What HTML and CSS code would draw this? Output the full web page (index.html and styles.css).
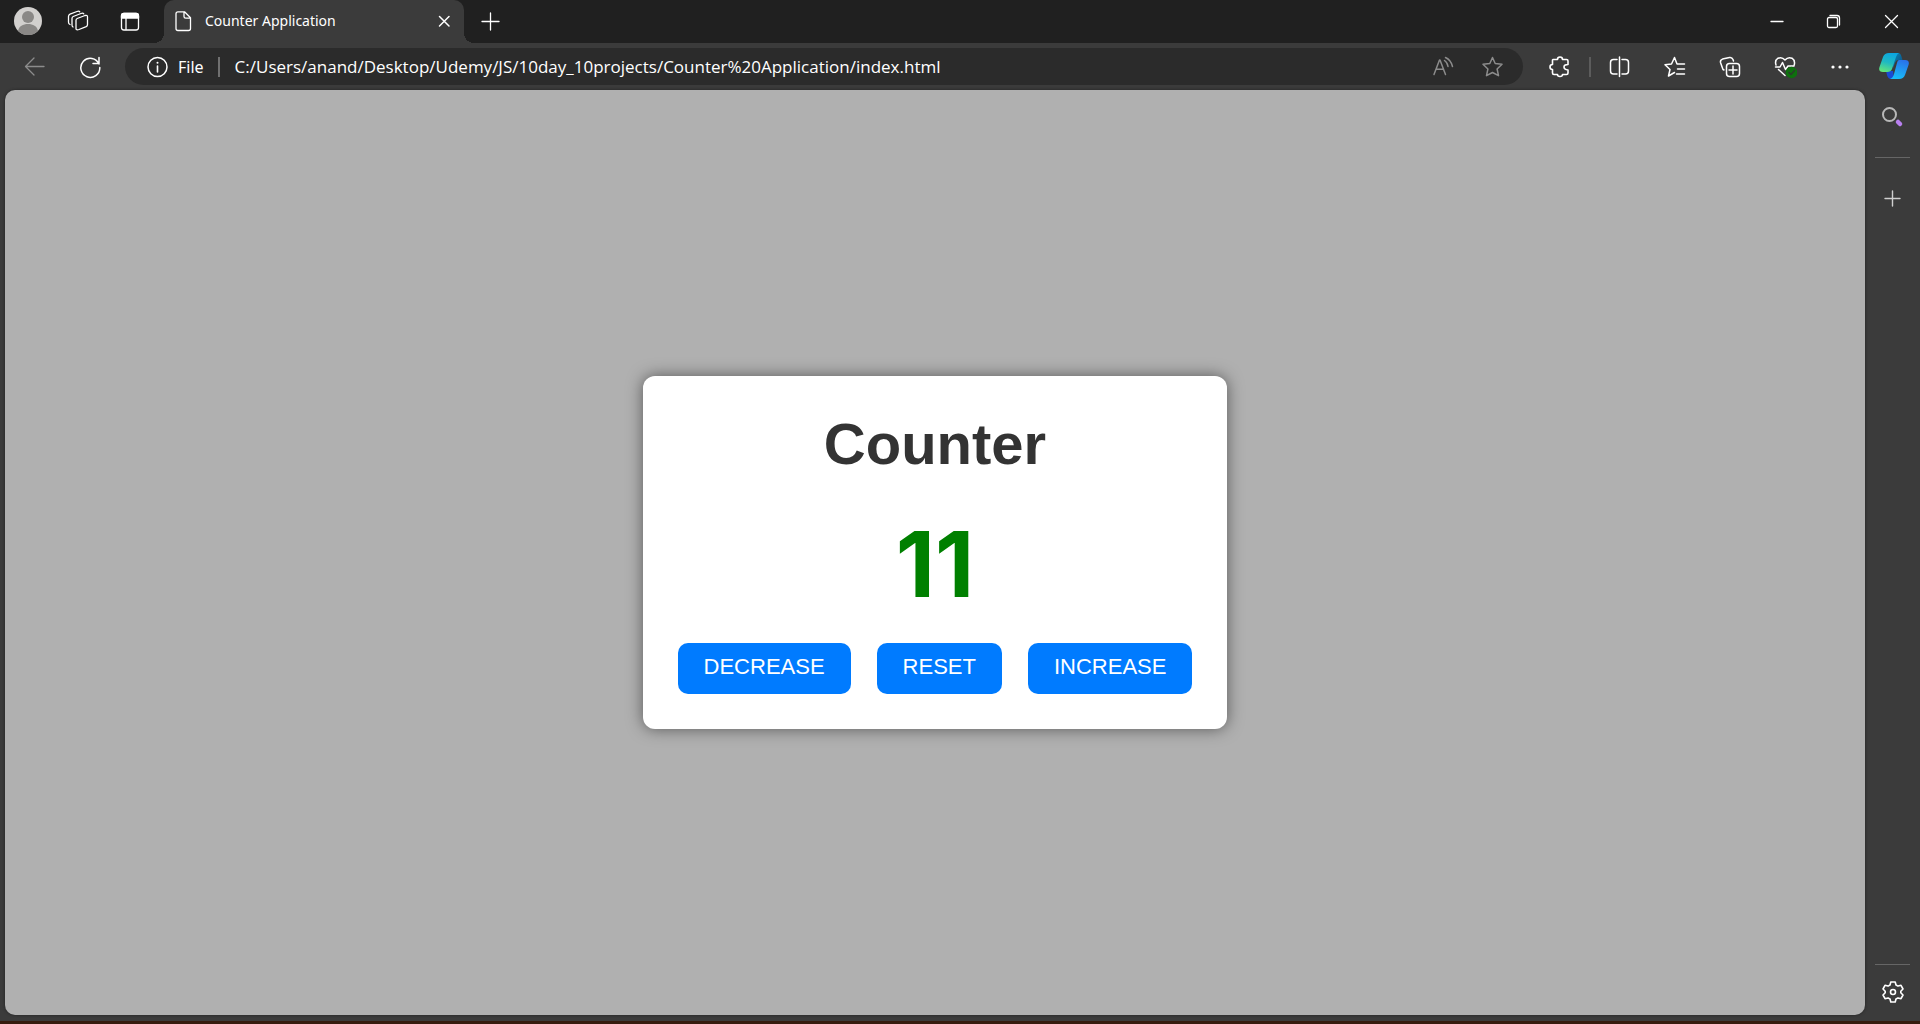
FILE: index.html
```html
<!DOCTYPE html>
<html lang="en">
<head>
<meta charset="utf-8">
<title>Counter Application</title>
<link rel="stylesheet" href="styles.css">
</head>
<body>
<header class="titlebar">
  <button class="chrome-btn" aria-label="Profile">
    <svg class="avatar" viewBox="0 0 28 28"><circle cx="14" cy="14" r="14" fill="#d2d0ce"/><circle cx="14" cy="10" r="6" fill="#8a8886"/><path d="M4 24c1-5 5-7 10-7s9 2 10 7a14 14 0 0 1-20 0z" fill="#8a8886"/></svg>
  </button>
  <button class="chrome-btn" aria-label="Workspaces">
    <svg class="icon" viewBox="0 0 24 24"><path d="M9 11.200Q9 10 10.200 9.500L18 6.500Q20.500 5.800 20.500 8V15.500Q20.500 17 19.200 17.600L12 20.500Q9 21.500 9 19.500ZM6 18Q5 17.500 5 16V9.500Q5 8 6.200 7.500L14 4.500Q16 3.800 16.800 4.800M3 15.500Q1.500 15 1.500 13.300V7.500Q1.500 5.700 3 5.100L10 2.500Q12 1.800 12.800 2.800"/></svg>
  </button>
  <button class="chrome-btn" aria-label="Tab actions menu">
    <svg class="icon" viewBox="0 0 24 24"><rect x="3.500" y="4.500" width="17" height="16.500" rx="2.500"/><path d="M3.500 9V7Q3.500 4.500 6 4.500H18Q20.500 4.500 20.500 7V9Z" fill="#fff"/><path d="M8 8V20.500"/></svg>
  </button>
  <div class="tab">
    <svg class="icon" viewBox="0 0 24 24"><path d="M7 2.800H13.500L19.500 8.800V19.500Q19.500 21.500 17.500 21.500H7Q5 21.500 5 19.500V4.800Q5 2.800 7 2.800ZM13 3V7.500Q13 9.200 14.700 9.200H19"/></svg>
    <span class="tab-title">Counter Application</span>
    <button class="tab-close" aria-label="Close tab">
      <svg class="icon" viewBox="0 0 24 24"><path d="M7.500 7.500L17 17M17 7.500L7.500 17" stroke-width="1.500"/></svg>
    </button>
  </div>
  <button class="chrome-btn" aria-label="New tab">
    <svg class="icon" viewBox="0 0 24 24"><path d="M12.500 4V21M4 12.500H21"/></svg>
  </button>
  <div class="window-controls">
    <button class="window-btn" aria-label="Minimize"><svg class="icon" viewBox="0 0 24 24"><path d="M5 12.500H17"/></svg></button>
    <button class="window-btn" aria-label="Restore"><svg class="icon" viewBox="0 0 24 24"><rect x="4.500" y="8.500" width="10" height="10" rx="1.500"/><path d="M7 6.500H14Q16.500 6.500 16.500 9V16"/></svg></button>
    <button class="window-btn" aria-label="Close"><svg class="icon" viewBox="0 0 24 24"><path d="M5.500 6.500L17.500 18.500M17.500 6.500L5.500 18.500"/></svg></button>
  </div>
</header>

<nav class="toolbar">
  <button class="tool-btn dim" aria-label="Back"><svg class="icon" viewBox="0 0 24 24"><path d="M21 11.500H2.500M11 3L2.500 11.500L11 20" /></svg></button>
  <button class="tool-btn" aria-label="Refresh"><svg class="icon" viewBox="0 0 24 24"><path d="M21 9A9.500 9.500 0 1 0 21.800 12.500M21 2.500V8.500H15" stroke-width="1.500"/></svg></button>
  <div class="address">
    <svg class="icon" viewBox="0 0 24 24"><circle cx="12.500" cy="12" r="9.500" stroke-width="1.500"/><path d="M12.500 11V17" stroke-width="1.600"/><circle class="solid" cx="12.500" cy="7.800" r="1"/></svg>
    <label class="scheme" for="url">File</label>
    <input class="url" id="url" type="text" value="C:/Users/anand/Desktop/Udemy/JS/10day_10projects/Counter%20Application/index.html">
    <button class="address-btn dim" aria-label="Read aloud"><svg class="icon" viewBox="0 0 24 24"><path d="M4 19.500L9.500 5H10L15.500 19.500M6 14.300H13.600M14.500 5.500Q17.500 7.500 18 11.500M15.500 2.500Q21 5 22.500 11.500" stroke-width="1.500"/></svg></button>
    <button class="address-btn dim" aria-label="Add to favorites"><svg class="icon" viewBox="0 0 24 24"><path d="M12.500 2.500L15.200 8.500L22 9.300L17.100 14L18.500 20.700L12.500 17.500L6.500 20.700L7.900 14L3 9.300L9.800 8.500Z" stroke-width="1.500"/></svg></button>
  </div>
  <button class="tool-btn" aria-label="Extensions"><svg class="icon" viewBox="0 0 24 24"><path d="M6 4.500H10.500Q10.500 2 13 2T15.500 4.500H19.500Q21 4.500 21 6V9.500Q17 9.500 17 12T21 15V18Q21 19.500 19.500 19.500H15.500Q15.500 21.500 13 21.500T10.500 19.500H7Q5.500 19.500 5.500 18V14.500Q3 14.500 3 12T5.500 9.500V5Z" stroke-width="1.600"/></svg></button>
  <span class="divider"></span>
  <button class="tool-btn" aria-label="Split screen"><svg class="icon" viewBox="0 0 24 24"><path d="M9 19H5.500Q2.500 19 2.500 16V7.500Q2.500 4.500 5.500 4.500H9M14 4.500H17.500Q20.500 4.500 20.500 7.500V16Q20.500 19 17.500 19H14M11.500 2V21.500" stroke-width="1.500"/></svg></button>
  <button class="tool-btn" aria-label="Favorites"><svg class="icon" viewBox="0 0 24 24"><path d="M11.500 17.500L5.500 21L7 14.500L2 9.700L8.500 9L11.500 2.500L14 9H21.500M14.500 14H21.500M13.500 19H21.500" stroke-width="1.500"/></svg></button>
  <button class="tool-btn" aria-label="Collections"><svg class="icon" viewBox="0 0 24 24"><rect x="8.500" y="8.500" width="13" height="13" rx="3" stroke-width="1.500"/><path d="M15 11V19M11 15H19M6 15L5 14.500L2.500 7.500Q2 5 4.500 4.100L11.500 2.500Q14 2 15 4.500L15.500 6" stroke-width="1.500"/></svg></button>
  <button class="tool-btn" aria-label="Browser essentials"><svg class="icon" viewBox="0 0 24 24"><path d="M3 10Q1.500 5.500 5 3.200Q9 1.500 12 5Q15 1.500 19 3.200Q22.500 5.500 21.200 10M2.500 12H7L9.500 7.500L12.500 14.500L15 11H21M5.500 14.500L12 20.500" stroke-width="1.500"/><circle cx="18.500" cy="17.500" r="5.800" fill="#0e700e" stroke="none"/><path d="M16 17.500L18 19.500L21.500 15.500" stroke="#2b3b2b" stroke-width="1.400"/></svg></button>
  <button class="tool-btn" aria-label="Settings and more"><svg class="icon" viewBox="0 0 24 24"><g class="solid"><circle cx="5" cy="12" r="1.600"/><circle cx="12" cy="12" r="1.600"/><circle cx="19" cy="12" r="1.600"/></g></svg></button>
  <button class="copilot-btn" aria-label="Copilot">
    <svg class="copilot" viewBox="0 0 30 28">
      <defs>
        <linearGradient id="teal" x1="0.600" y1="0" x2="0.300" y2="1"><stop offset="0" stop-color="#0ba5e0"/><stop offset="0.500" stop-color="#1fb9c3"/><stop offset="1" stop-color="#63e57a"/></linearGradient>
        <linearGradient id="azure" x1="0.700" y1="0" x2="0.400" y2="1"><stop offset="0" stop-color="#2a71e8"/><stop offset="1" stop-color="#18bdf8"/></linearGradient>
        <linearGradient id="fold" x1="0" y1="0" x2="1" y2="1"><stop offset="0" stop-color="#0b86b5"/><stop offset="1" stop-color="#0a4a80"/></linearGradient>
      </defs>
      <path d="M14 0H19Q21.500 0 22.300 3L23.500 7H19Q17 7 16 10L14 15Z" fill="url(#fold)"/>
      <path d="M7 18H14L15 24Q14 26 12 26Q9 26 8 22Z" fill="#194bd4"/>
      <path d="M10 0H20Q18 1 17 4L13 16Q12 19 8 19H4Q-1 19 .5 14L4 4Q5.500 0 10 0Z" fill="url(#teal)"/>
      <path d="M20 7H26Q31 7 29.500 12L26 22Q24.500 26 20 26H11Q14 25 15 21L18 10Q18.500 7 20 7Z" fill="url(#azure)"/>
    </svg>
  </button>
</nav>

<div class="workspace">
  <main class="page">
    <section class="card">
      <h1 class="heading">Counter</h1>
      <output class="count">11</output>
      <div class="actions">
        <button class="action">DECREASE</button>
        <button class="action">RESET</button>
        <button class="action">INCREASE</button>
      </div>
    </section>
  </main>
  <aside class="sidebar">
    <button class="side-btn" aria-label="Search"><svg class="icon" viewBox="0 0 24 24"><path d="M17 17L19 19" stroke="#b980f0" stroke-width="4.500"/><circle cx="8.500" cy="9.500" r="6.500" stroke="#b8b8b8" stroke-width="2"/></svg></button>
    <hr class="rule">
    <button class="side-btn" aria-label="Customize"><svg class="icon" viewBox="0 0 24 24"><path d="M11.500 5V20M4 12.500H19" stroke="#d0d0d0" stroke-width="1.400"/></svg></button>
    <span class="spacer"></span>
    <hr class="rule">
    <button class="side-btn" aria-label="Settings"><svg class="icon" viewBox="0 0 24 24"><circle cx="12" cy="12" r="2.500" stroke-width="1.600"/><path d="M9.800 2H14.200L15 5L17 6.100L20 5.300L22 9L19.800 11.300V12.700L22 15L20 18.700L17 17.900L15 19L14.200 22H9.800L9 19L7 17.900L4 18.700L2 15L4.200 12.700V11.300L2 9L4 5.300L7 6.100L9 5Z" stroke-width="1.600"/></svg></button>
  </aside>
</div>
</body>
</html>
```
FILE: styles.css
```css
* {
  box-sizing: border-box;
}

body {
  margin: 0;
  min-height: 100vh;
  display: flex;
  flex-direction: column;
  background: #3b3b3b;
  border-bottom: 3px solid #361c0e;
  color: #fff;
  font-family: "Noto Sans", "Open Sans", sans-serif;
}

button {
  display: flex;
  align-items: center;
  justify-content: center;
  padding: 0;
  border: 0;
  background: none;
  color: inherit;
  font: inherit;
}

.icon {
  flex: none;
  width: 24px;
  height: 24px;
  fill: none;
  stroke: currentColor;
  stroke-width: 1.3;
  stroke-linecap: round;
  stroke-linejoin: round;
}

.solid {
  fill: currentColor;
  stroke: none;
}

.dim {
  color: #8c8c8c;
}

/* Title bar */
.titlebar {
  display: flex;
  height: 43px;
  padding-left: 2px;
  background: #202020;
}

.chrome-btn {
  width: 51px;
  padding-bottom: 2px;
}

.avatar {
  width: 28px;
  height: 28px;
}

.tab {
  position: relative;
  display: flex;
  align-items: center;
  width: 300px;
  margin-left: 9px;
  padding: 0 8px 2px 7px;
  gap: 10px;
  background: #3b3b3b;
  border-radius: 10px 10px 0 0;
}

.tab::before,
.tab::after {
  content: "";
  position: absolute;
  bottom: 0;
  width: 10px;
  height: 10px;
}

.tab::before {
  right: 100%;
  background: radial-gradient(circle at 0 0, #202020 10px, #3b3b3b 10px);
}

.tab::after {
  left: 100%;
  background: radial-gradient(circle at 100% 0, #202020 10px, #3b3b3b 10px);
}

.tab-title {
  flex: 1;
  font-size: 14px;
  line-height: 20px;
}

.window-controls {
  display: flex;
  margin-left: auto;
}

.window-btn {
  width: 57px;
  padding-bottom: 2px;
}

/* Toolbar */
.toolbar {
  display: flex;
  align-items: center;
  height: 47px;
  padding-left: 7px;
}

.tool-btn {
  width: 55px;
  height: 37px;
}

.address {
  flex: 1;
  display: flex;
  align-items: center;
  height: 37px;
  margin: 0 8px;
  padding: 0 6px 0 20px;
  background: #2b2b2b;
  border-radius: 19px;
}

.scheme {
  margin-left: 9px;
  padding-right: 14px;
  border-right: 2px solid #707070;
  font-size: 16px;
  line-height: 20px;
}

.url {
  flex: 1;
  min-width: 0;
  padding: 0 0 0 15px;
  border: 0;
  outline: 0;
  background: none;
  color: inherit;
  font: 17px/24px "Open Sans", "Noto Sans", sans-serif;
}

.address-btn {
  width: 50px;
  height: 37px;
}

.divider {
  width: 2px;
  height: 20px;
  margin: 0 1px 0 3px;
  background: #5c5c5c;
}

.copilot-btn {
  width: 53px;
  height: 37px;
}

.copilot {
  width: 30px;
  height: 28px;
}

/* Page and sidebar */
.workspace {
  flex: 1;
  display: flex;
  padding-left: 5px;
}

.page {
  flex: 1;
  display: flex;
  align-items: center;
  justify-content: center;
  margin-bottom: 6px;
  background: #b0b0b0;
  border-radius: 10px;
  box-shadow: 0 0 3px #202020;
}

.card {
  padding: 35px;
  background: #fff;
  border-radius: 12px;
  box-shadow: 0 0 16px rgba(0, 0, 0, 0.5);
  font-family: "Liberation Sans", Arial, sans-serif;
  text-align: center;
}

.heading {
  margin: 0;
  color: #333;
  font-size: 58px;
  line-height: 66px;
}

.count {
  display: block;
  margin: 29px 0 21px;
  color: green;
  font-family: Inter, Arial, sans-serif;
  font-size: 91px;
  font-weight: bold;
  line-height: 116px;
}

.actions {
  display: flex;
  gap: 26px;
}

.action {
  height: 51px;
  padding: 0 26px 4px;
  border-radius: 10px;
  background: #007bff;
  color: #fff;
  font-size: 22px;
}

.sidebar {
  display: flex;
  flex-direction: column;
  align-items: center;
  width: 55px;
  padding-bottom: 2px;
}

.side-btn {
  width: 48px;
  height: 54px;
}

.rule {
  width: 35px;
  height: 1px;
  margin: 13px 0;
  border: 0;
  background: #666;
}

.rule:last-of-type {
  margin: 0;
}

.spacer {
  flex: 1;
}
```
